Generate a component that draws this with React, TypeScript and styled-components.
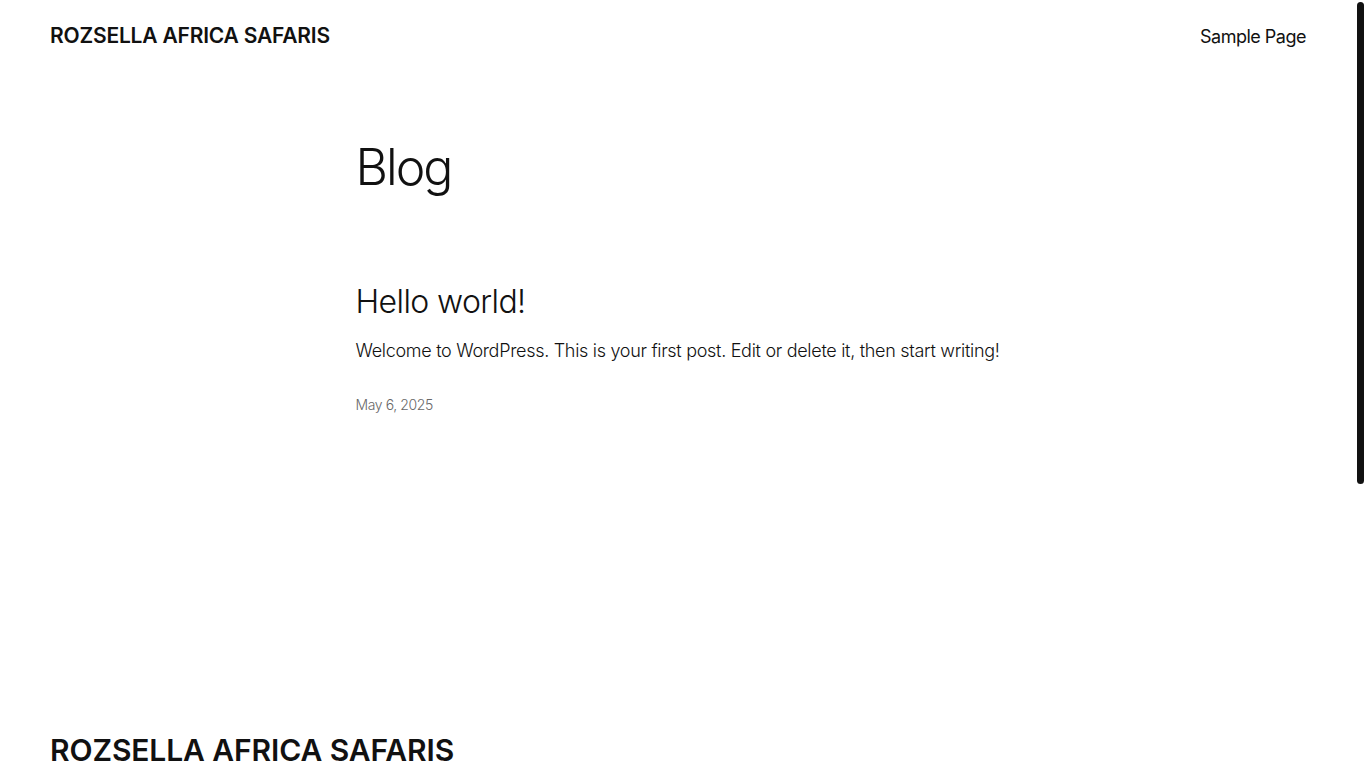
import styled, { createGlobalStyle } from 'styled-components';

const GlobalStyle = createGlobalStyle`
  html, body {
    overflow: hidden;
  }
  body {
    margin: 0 10px 0 0;
    font-family: Inter, "Noto Sans", sans-serif;
    color: #111111;
    background: #ffffff;
  }
  a {
    color: inherit;
    text-decoration: none;
  }
`;

// the page's scrollbar thumb, drawn over the right edge
const ScrollThumb = styled.div`
  position: fixed;
  top: 2px;
  right: 2px;
  width: 7px;
  height: 482px;
  border-radius: 4px;
  background: #111111;
`;

const Header = styled.header`
  display: flex;
  align-items: center;
  justify-content: space-between;
  height: 70px;
  padding: 1px 50px 0;
`;

const SiteTitle = styled.a<{ $size: number; $spacing: number }>`
  font-size: ${(p) => p.$size}px;
  font-weight: 600;
  letter-spacing: ${(p) => p.$spacing}px;
  line-height: 1.15;
  text-transform: uppercase;
`;

const Nav = styled.nav`
  display: flex;
  gap: 24px;
  font-size: 18px;
  font-weight: 400;
  letter-spacing: -0.5px;
`;

const Main = styled.main`
  width: 645px;
  margin: 0 auto;
  padding-top: 66px;
`;

const PageTitle = styled.h1`
  margin: 0 0 86px;
  font-size: 50px;
  font-weight: 300;
  line-height: 1.2;
  letter-spacing: -2px;
`;

const Post = styled.article`
  display: flex;
  flex-direction: column;
`;

const PostTitle = styled.h2`
  margin: 0 0 16px;
  font-size: 32px;
  font-weight: 300;
  line-height: 1.2;
  letter-spacing: -0.6px;
`;

const Excerpt = styled.p`
  margin: 0 0 29px;
  font-size: 18px;
  font-weight: 300;
  line-height: 1.6;
  letter-spacing: -0.3px;
`;

const PostDate = styled.time`
  font-size: 14px;
  font-weight: 300;
  line-height: 1.4;
  color: #686868;
  letter-spacing: -0.4px;
`;

const Footer = styled.footer`
  margin-top: 318px;
  padding: 0 50px;
`;

export default function App() {
  return (
    <>
      <GlobalStyle />
      <ScrollThumb />
      <Header>
        <SiteTitle href="#" $size={21} $spacing={-0.2}>Rozsella Africa Safaris</SiteTitle>
        <Nav>
          <a href="#">Sample Page</a>
        </Nav>
      </Header>
      <Main>
        <PageTitle>Blog</PageTitle>
        <Post>
          <PostTitle>Hello world!</PostTitle>
          <Excerpt>Welcome to WordPress. This is your first post. Edit or delete it, then start writing!</Excerpt>
          <PostDate>May 6, 2025</PostDate>
        </Post>
      </Main>
      <Footer>
        <SiteTitle href="#" $size={30} $spacing={-0.1}>Rozsella Africa Safaris</SiteTitle>
      </Footer>
    </>
  );
}
